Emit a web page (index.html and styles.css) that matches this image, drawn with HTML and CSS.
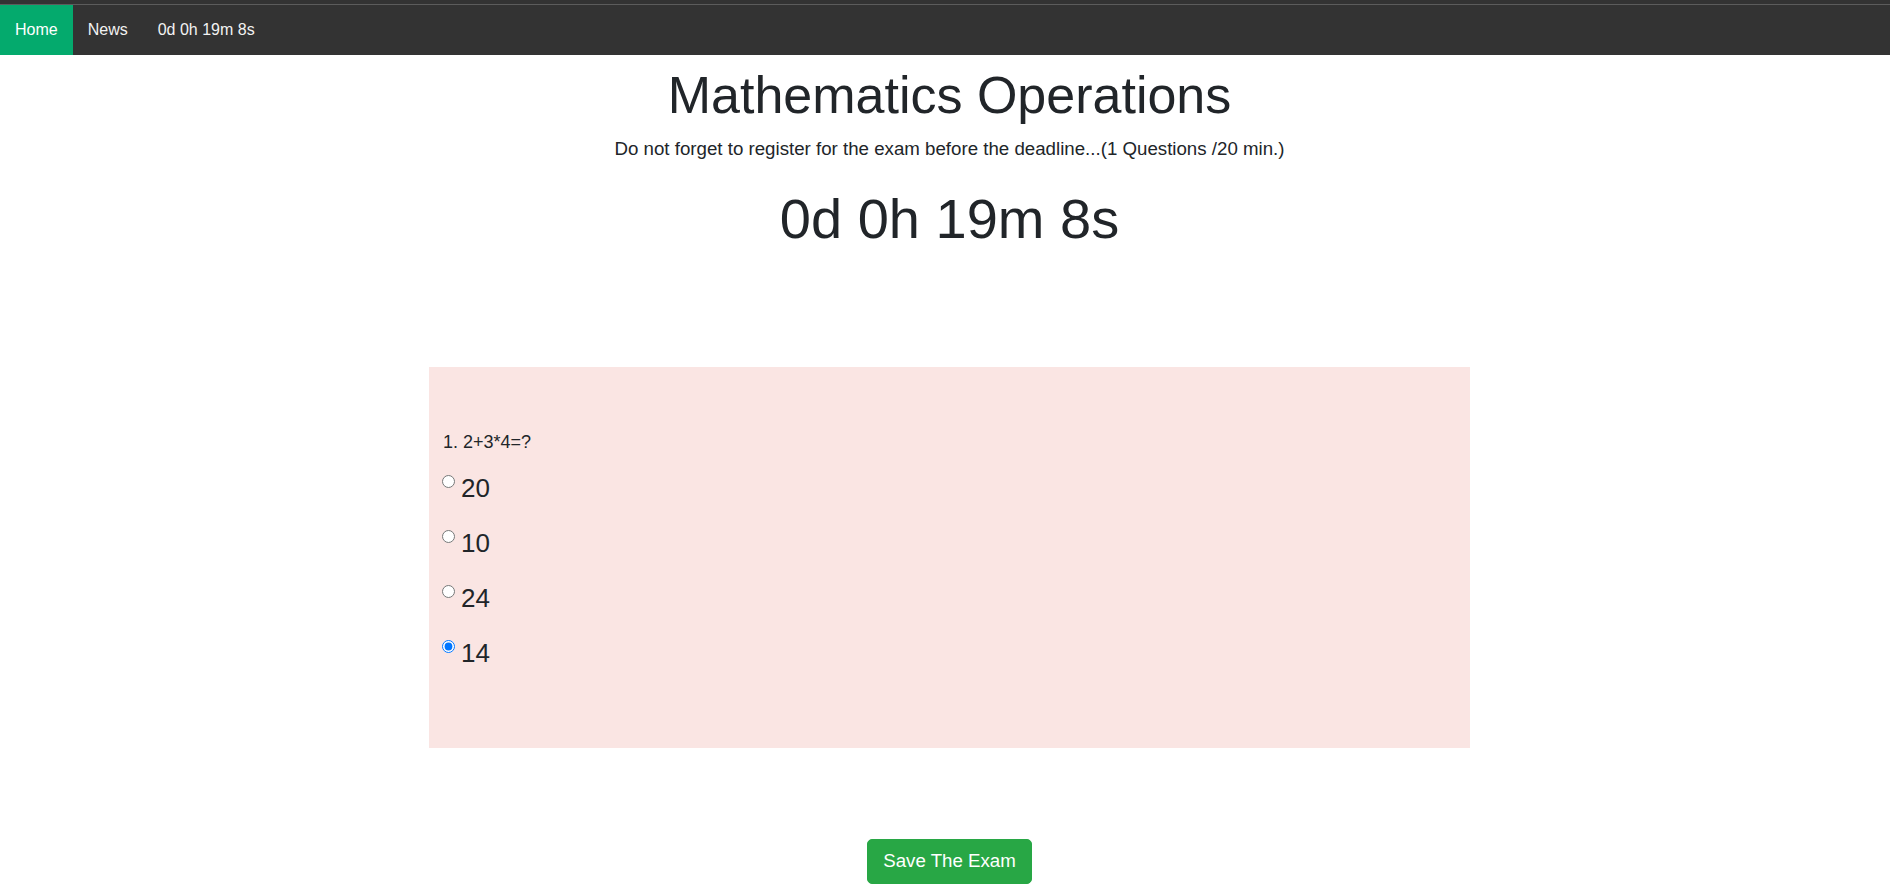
FILE: index.html
```html
<!DOCTYPE html>
<html lang="en">
<head>
<meta charset="utf-8">
<title>Mathematics Operations</title>
<link rel="stylesheet" href="styles.css">
</head>
<body>
<div class="topline"></div>
<nav class="topnav">
  <a class="navlink active" href="#">Home</a>
  <a class="navlink" href="#">News</a>
  <a class="navlink" href="#">0d 0h 19m 8s</a>
</nav>
<main class="main">
  <h1 class="title">Mathematics Operations</h1>
  <p class="subtitle">Do not forget to register for the exam before the deadline...(1 Questions /20 min.)</p>
  <h1 class="timer">0d 0h 19m 8s</h1>
  <section class="question-card">
    <p class="question">1. 2+3*4=?</p>
    <div class="answer"><input class="radio" type="radio" name="q1" id="a1"><label class="answer-label" for="a1">20</label></div>
    <div class="answer"><input class="radio" type="radio" name="q1" id="a2"><label class="answer-label" for="a2">10</label></div>
    <div class="answer"><input class="radio" type="radio" name="q1" id="a3"><label class="answer-label" for="a3">24</label></div>
    <div class="answer"><input class="radio" type="radio" name="q1" id="a4" checked><label class="answer-label" for="a4">14</label></div>
  </section>
  <button class="save-btn" type="button">Save The Exam</button>
</main>
</body>
</html>
```
FILE: styles.css
```css
html, body {
  margin: 0;
  padding: 0;
  background: #ffffff;
}
body {
  font-family: "Liberation Sans", Arial, sans-serif;
  color: #212529;
  overflow: hidden;
}
.topline {
  height: 4px;
  background: #333333;
  border-bottom: 1px solid #5c5c5c;
}
.topnav {
  display: flex;
  height: 50px;
  background: #333333;
}
.navlink {
  display: block;
  padding: 0 15px;
  line-height: 50px;
  font-size: 16px;
  color: #f2f2f2;
  text-decoration: none;
}
.navlink.active {
  background: #04aa6d;
  color: #ffffff;
}
.main {
  padding-left: 9px;
  text-align: center;
}
.title {
  margin: 9px 0 9px;
  font-size: 52px;
  font-weight: 400;
  line-height: 1.2;
}
.subtitle {
  margin: 0;
  font-size: 18.7px;
  line-height: 1.5;
}
.timer {
  margin: 22px 0 0;
  font-size: 56px;
  font-weight: 400;
  line-height: 1.2;
}
.question-card {
  width: 1041px;
  margin: 114px auto 0;
  box-sizing: border-box;
  padding: 62px 14px 75px 13px;
  background: #fae5e3;
  text-align: left;
}
.question {
  margin: 0 0 11px 1px;
  font-size: 18px;
  line-height: 1.5;
}
.answer {
  display: flex;
  align-items: flex-start;
  margin-bottom: 14px;
  font-size: 26px;
  line-height: 1.5;
}
.answer:last-child {
  margin-bottom: 0;
}
.radio {
  width: 13px;
  height: 13px;
  margin: 8.5px 0 0 0;
}
.answer-label {
  margin-left: 6px;
  padding-top: 2px;
}
.save-btn {
  margin-top: 91px;
  padding: 7.5px 15.3px;
  border: 1px solid #28a745;
  border-radius: 5px;
  background: #28a745;
  color: #ffffff;
  font-family: "Liberation Sans", Arial, sans-serif;
  font-size: 18.7px;
  line-height: 1.5;
  cursor: pointer;
}
```
